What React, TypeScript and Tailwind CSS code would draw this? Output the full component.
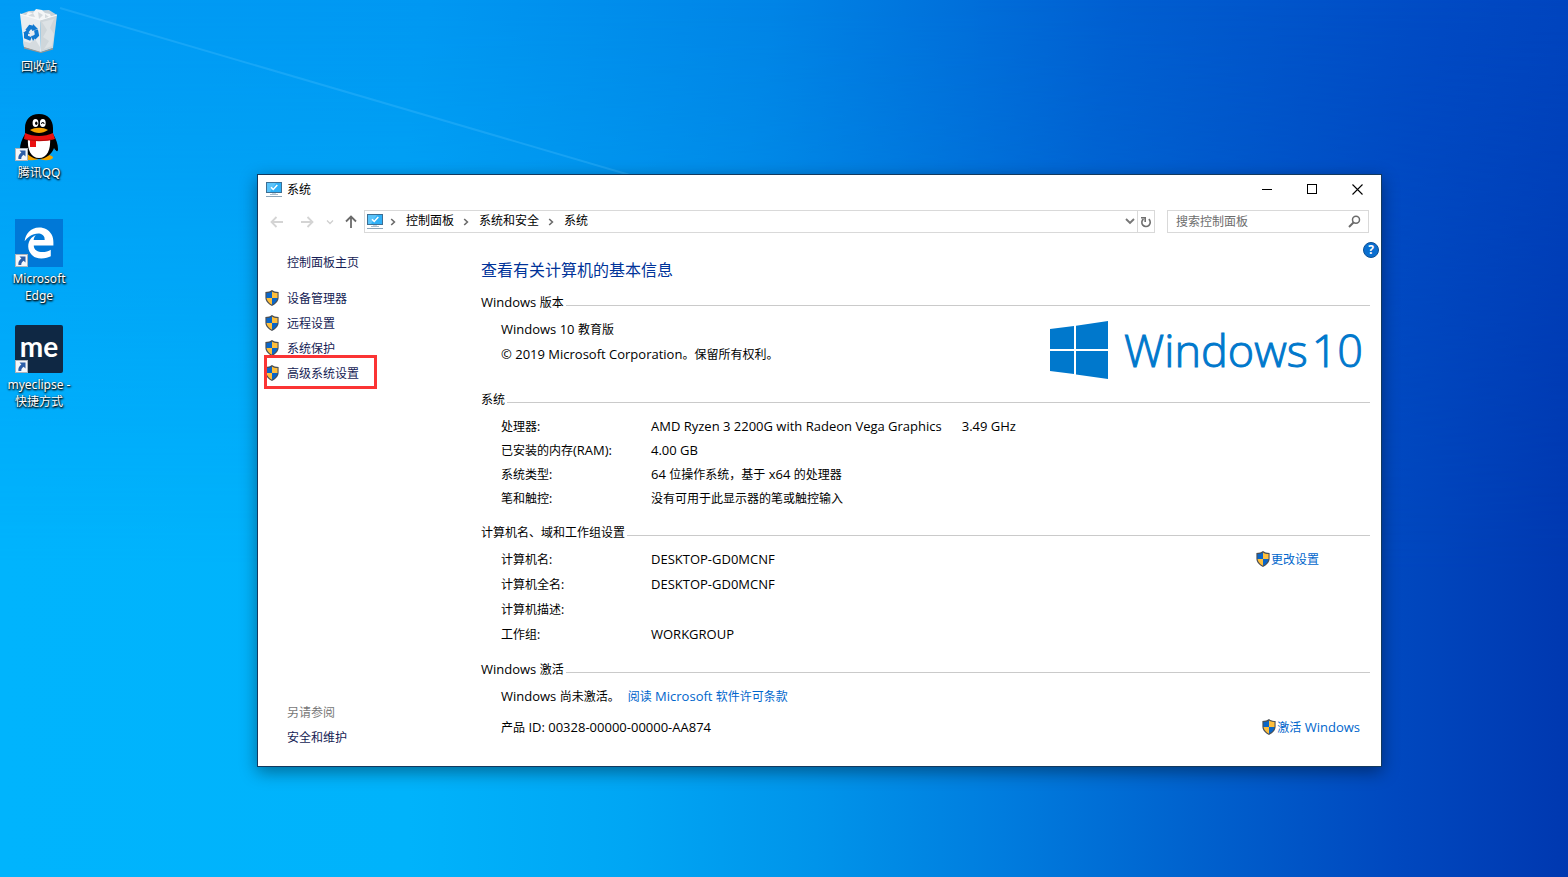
import { ReactNode } from "react";
import { FaEdgeLegacy } from "react-icons/fa6";

/* ── Icons ── */

function Shield() {
  return (
    <svg width="14" height="16" viewBox="0 0 14 16" className="mb-0.5 shrink-0" aria-hidden="true">
      <path d="M7 0C5.6 1.3 3 2 .4 2v5.500C.4 11.500 3.500 14.200 7 16c3.500-1.800 6.600-4.500 6.600-8.500V2C11 2 8.400 1.300 7 0z" fill="#4b4f54" />
      <path d="M7 1.500C5.500 2.500 3.600 3 1.500 3.100V8H7z" fill="#0a66c8" />
      <path d="M7 1.500C8.500 2.500 10.400 3 12.500 3.100V8H7z" fill="#ffbf3c" />
      <path d="M1.500 8c.3 2.900 2.500 5.100 5.500 6.700V8z" fill="#ffbf3c" />
      <path d="M12.500 8c-.3 2.900-2.500 5.100-5.500 6.700V8z" fill="#0a66c8" />
    </svg>
  );
}

function ComputerIcon() {
  return (
    <svg width="16" height="16" viewBox="0 0 16 16" className="shrink-0" aria-hidden="true">
      <rect x="0" y="0" width="16" height="11" fill="#3d6f94" />
      <rect x="1" y="1" width="14" height="9" fill="#2fb0f7" />
      <path d="M1 1h9L4 10H1z" fill="#5cc4fa" />
      <path d="M5 5.300l2.200 2.200L11.300 3" fill="none" stroke="#fff" strokeWidth="1.500" />
      <rect x="4" y="12" width="8" height="1" fill="#a9bccb" />
      <rect x="6" y="11" width="4" height="1" fill="#c8d6e0" />
      <rect x="0" y="14" width="16" height="1" fill="#8aa4b8" />
    </svg>
  );
}

function Chevron() {
  return (
    <svg width="7" height="8" viewBox="0 0 7 8" className="shrink-0" aria-hidden="true">
      <path d="M1.200 1L4.400 4 1.200 7" fill="none" stroke="#6b6b6b" strokeWidth="1.600" />
    </svg>
  );
}

function Arrow({ turn, color }: { turn: string; color: string }) {
  return (
    <svg width="14" height="14" viewBox="0 0 14 14" className={turn} aria-hidden="true">
      <path d="M13 7H2M6.500 2L1.500 7l5 5" fill="none" stroke={color} strokeWidth="1.800" />
    </svg>
  );
}

function RecycleBin() {
  return (
    <svg width="48" height="48" viewBox="0 0 48 48" aria-hidden="true">
      <path d="M6 7l8-3 20-1 8 5-4 4-12 3L9 12z" fill="#c9d2d8" />
      <path d="M10 10l3-5 5 1 3-4 6 1 3 3 5 1 2 5-9 3-12-1z" fill="#f4f6f7" />
      <path d="M13 9l5-3 2 4zM23 5l5 3-4 4zM30 7l4 3-4 2z" fill="#d4dade" />
      <path d="M5 7l20 6 1 32-17-5z" fill="#e9edf0" />
      <path d="M25 13l17-5-4 33-12 4z" fill="#cfd6da" />
      <path d="M27 15l5 8-4 7 6 4-5 8 8-3 2-12-4-6 4-9z" fill="#dde2e5" />
      <path d="M8 34l7 2 5-4 5 8v5L9 40z" fill="#d5dbdf" />
      <path d="M5 7l20 6 17-5" fill="none" stroke="#f8fafb" strokeWidth="1" />
      <path d="M9 40l17 5 12-4v1.500L26 46 9 41.500z" fill="#9b9690" />
      <g fill="none" stroke="#1179d0" strokeWidth="4">
        <path d="M12 24l3-4 4 1" />
        <path d="M21 23l1 5-3 3" />
        <path d="M16 32l-5-2v-4" />
      </g>
      <path d="M18 17l5 5-6 2zM22 28l-6 1 2 5zM8 26l4-3 3 4z" fill="#1179d0" />
    </svg>
  );
}

function Penguin() {
  return (
    <svg width="48" height="48" viewBox="0 0 48 48" aria-hidden="true">
      <ellipse cx="16" cy="44.500" rx="9" ry="2.800" fill="#f5a500" />
      <ellipse cx="31" cy="44.500" rx="7" ry="2.800" fill="#f5a500" />
      <path d="M24 1C15 1 10 7 10 15v6C7 26 5 31 5 36c0 3 1.500 3 4-1 2 6 8 11 15 11s13-5 15-11c2.500 4 4 4 4 1 0-5-2-10-5-15v-6C38 7 33 1 24 1z" fill="#000" />
      <path d="M13 25h22c1 12-3 20-11 20S12 37 13 25z" fill="#fff" />
      <ellipse cx="20.500" cy="10" rx="2.900" ry="4" fill="#fff" />
      <ellipse cx="27.800" cy="10" rx="2.900" ry="4" fill="#fff" />
      <ellipse cx="21.300" cy="10.300" rx="1.200" ry="1.800" fill="#000" />
      <path d="M26.500 11c.3-2 2.300-2 2.600 0" fill="none" stroke="#000" strokeWidth="1.100" />
      <path d="M15 17c5-3 13-3 18 0-3 2-6 3-9 3s-6-1-9-3z" fill="#f5a000" />
      <path d="M10 20c8 4 20 4 28 0l2 6c-9 3-23 3-31 0z" fill="#ea1111" />
      <path d="M15 26h6v8h-6z" fill="#ea1111" />
      <path d="M10 26c8 2 21 2 28 0" fill="none" stroke="#8e0a0a" strokeWidth=".6" />
    </svg>
  );
}

function ShortcutMark() {
  return (
    <svg width="13" height="13" viewBox="0 0 13 13" className="absolute bottom-0 left-0" aria-hidden="true">
      <rect x=".5" y=".5" width="12" height="12" fill="#f5f7fa" stroke="#aeb4bb" />
      <path d="M4.500 2.500h6v6L8.600 6.700C6.800 7.900 6.200 9.300 6.300 11H3.400c-.4-2.600.8-4.900 3-6.500z" fill="#2c5ea8" />
    </svg>
  );
}

// Latin runs are set one size up, so they sit evenly beside the Chinese glyphs
function En({ children }: { children: ReactNode }) {
  return <span className="font-['Open_Sans'] text-[13px] leading-none">{children}</span>;
}

/* ── Desktop ── */

const desktopIcons: { label: string; art: ReactNode; shortcut: boolean }[] = [
  { label: "回收站", art: <RecycleBin />, shortcut: false },
  { label: "腾讯QQ", art: <Penguin />, shortcut: true },
  {
    label: "Microsoft Edge",
    art: (
      <span className="flex size-12 items-center justify-center bg-[#0078d7] text-white">
        <FaEdgeLegacy size={32} />
      </span>
    ),
    shortcut: true,
  },
  {
    label: "myeclipse - 快捷方式",
    art: (
      <span className="flex size-12 items-center justify-center rounded-xs bg-[#0f2844] pb-1.5 font-['Lato'] text-[28px] leading-none font-bold text-white">
        me
      </span>
    ),
    shortcut: true,
  },
];

/* ── Window content ── */

const tasks = ["设备管理器", "远程设置", "系统保护", "高级系统设置"];

const systemRows: [ReactNode, ReactNode][] = [
  ["处理器:", <En>AMD Ryzen 3 2200G with Radeon Vega Graphics<span className="ml-5">3.49 GHz</span></En>],
  [<>已安装的内存<En>(RAM):</En></>, <En>4.00 GB</En>],
  ["系统类型:", <><En>64 </En>位操作系统，基于<En> x64 </En>的处理器</>],
  ["笔和触控:", "没有可用于此显示器的笔或触控输入"],
];

const nameRows: [string, string][] = [
  ["计算机名:", "DESKTOP-GD0MCNF"],
  ["计算机全名:", "DESKTOP-GD0MCNF"],
  ["计算机描述:", ""],
  ["工作组:", "WORKGROUP"],
];

function SectionTitle({ children }: { children: ReactNode }) {
  return (
    <div className="mb-[3px] flex h-[22px] items-center gap-0.5">
      <h2 className="leading-4">{children}</h2>
      <div className="mt-[5px] h-px flex-1 bg-[#cacaca]" />
    </div>
  );
}

function WindowsLogo() {
  return (
    <div className="mr-[7px] flex items-center gap-4 pt-1 pb-2.5 text-[#0078cc]">
      <svg width="58" height="58" viewBox="0 0 58 58" fill="currentColor" aria-hidden="true">
        <path d="M0 8l24-3v23H0zM26 4.700L58 0v28H26zM0 30h24v23L0 50zM26 30h32v28l-32-4.500z" />
      </svg>
      <span className="flex gap-1 font-['Open_Sans'] text-[45px] leading-[58px] font-light [-webkit-text-stroke:1px_#0078cc]">
        <span>Windows</span>
        <span>10</span>
      </span>
    </div>
  );
}

function TitleBar() {
  return (
    <header className="flex h-[30px] items-center pl-2">
      <ComputerIcon />
      <h1 className="ml-[5px]">系统</h1>
      <div className="ml-auto flex h-full pb-0.5">
        <button aria-label="最小化" className="flex w-[46px] items-center justify-center">
          <svg width="10" height="10" viewBox="0 0 10 10"><path d="M0 5.500h10" stroke="#000" /></svg>
        </button>
        <button aria-label="最大化" className="flex w-11 items-center justify-center">
          <svg width="10" height="10" viewBox="0 0 10 10"><rect x=".5" y=".5" width="9" height="9" fill="none" stroke="#000" /></svg>
        </button>
        <button aria-label="关闭" className="flex w-[47px] items-center justify-center">
          <svg width="11" height="11" viewBox="0 0 11 11"><path d="M.5.5l10 10M10.500.5l-10 10" stroke="#000" strokeWidth="1.100" /></svg>
        </button>
      </div>
    </header>
  );
}

function AddressBar() {
  return (
    <div className="flex h-[33px] items-center pr-3 pl-3">
      <button aria-label="后退"><Arrow turn="" color="#d4d4d4" /></button>
      <button aria-label="前进" className="ml-4"><Arrow turn="rotate-180" color="#d4d4d4" /></button>
      <button aria-label="最近浏览的位置" className="ml-3">
        <svg width="8" height="6" viewBox="0 0 8 6"><path d="M1 1.500l3 3 3-3" fill="none" stroke="#cfcfcf" strokeWidth="1.300" /></svg>
      </button>
      <button aria-label="上移" className="ml-2.5"><Arrow turn="rotate-90" color="#6b6b6b" /></button>
      <div className="ml-1.5 flex h-[23px] flex-1 items-stretch border border-[#d9d9d9]">
        <nav className="flex flex-1 items-center pl-0.5">
          <ComputerIcon />
          <span className="ml-[7px] flex items-center gap-[9px]">
            <Chevron />
            <a href="#panel" className="pb-0.5">控制面板</a>
            <Chevron />
            <a href="#security" className="pb-0.5">系统和安全</a>
            <Chevron />
            <a href="#system" className="pb-0.5">系统</a>
          </span>
        </nav>
        <button aria-label="历史记录" className="px-0.5">
          <svg width="10" height="7" viewBox="0 0 10 7"><path d="M1 1l4 4 4-4" fill="none" stroke="#777" strokeWidth="1.900" /></svg>
        </button>
        <button aria-label="刷新" className="flex w-[17px] items-center justify-center border-l border-[#d9d9d9]">
          <svg width="12" height="12" viewBox="0 0 12 12">
            <path d="M8.800 3.200A4.200 4.200 0 1 1 3.500 3" fill="none" stroke="#6f6f6f" strokeWidth="1.600" />
            <path d="M1 1.800h4.200V6" fill="none" stroke="#6f6f6f" strokeWidth="1.600" />
          </svg>
        </button>
      </div>
      <label className="ml-3 flex h-[23px] w-[202px] items-center border border-[#d9d9d9] pr-[7px] pl-2">
        <input aria-label="搜索控制面板" placeholder="搜索控制面板" className="min-w-0 flex-1 outline-none placeholder:text-[#6d6d6d]" />
        <svg width="13" height="13" viewBox="0 0 13 13" aria-hidden="true">
          <circle cx="8" cy="4.800" r="3.500" fill="none" stroke="#6b6b6b" strokeWidth="1.500" />
          <path d="M5.500 7.500L1 12" stroke="#6b6b6b" strokeWidth="2" />
        </svg>
      </label>
    </div>
  );
}

function Sidebar() {
  return (
    <aside className="flex w-[223px] shrink-0 flex-col pb-4 pl-[7px] leading-[25px] text-[#151c55]">
      <a href="#home" className="mt-3 ml-[22px]">控制面板主页</a>
      <ul className="mt-[11px]">
        {tasks.map((task, i) => (
          <li key={task} className="relative">
            <a href="#task" className="flex items-center gap-2">
              <Shield />
              {task}
            </a>
            {i === tasks.length - 1 && (
              <span className="absolute -top-1.5 -left-px h-[34px] w-[113px] border-3 border-[#fb3434]" />
            )}
          </li>
        ))}
      </ul>
      <h2 className="mt-auto ml-[22px] text-[#777]">另请参阅</h2>
      <a href="#maintenance" className="ml-[22px]">安全和维护</a>
    </aside>
  );
}

function Details() {
  return (
    <main className="flex-1 pt-5 pr-[11px] pb-[26px]">
      <h1 className="mb-[10px] text-base leading-6 text-[#003399]">查看有关计算机的基本信息</h1>

      <SectionTitle><En>Windows </En>版本</SectionTitle>
      <div className="flex justify-between pl-5 leading-[25px]">
        <div>
          <p className="h-[25px]"><En>Windows 10 </En>教育版</p>
          <p className="h-[25px]"><En>© 2019 Microsoft Corporation</En>。保留所有权利。</p>
        </div>
        <WindowsLogo />
      </div>

      <SectionTitle>系统</SectionTitle>
      <dl className="mb-[11px] pt-px pl-5 leading-6">
        {systemRows.map(([name, value], i) => (
          <div key={i} className="flex h-6">
            <dt className="w-[150px]">{name}</dt>
            <dd>{value}</dd>
          </div>
        ))}
      </dl>

      <SectionTitle>计算机名、域和工作组设置</SectionTitle>
      <div className="mb-3 flex justify-between pl-5 leading-[25px]">
        <dl>
          {nameRows.map(([name, value]) => (
            <div key={name} className="flex h-[25px]">
              <dt className="w-[150px]">{name}</dt>
              <dd><En>{value}</En></dd>
            </div>
          ))}
        </dl>
        <a href="#change" className="mr-[51px] flex h-[25px] items-center gap-px text-[#0066cc]">
          <Shield />
          更改设置
        </a>
      </div>

      <SectionTitle><En>Windows </En>激活</SectionTitle>
      <div className="pl-5 leading-[25px]">
        <p className="h-[25px]">
          <En>Windows </En>尚未激活。
          <a href="#license" className="ml-2 text-[#0066cc]">阅读<En> Microsoft </En>软件许可条款</a>
        </p>
        <div className="mt-1.5 flex h-[25px] justify-between">
          <p>产品<En> ID: 00328-00000-00000-AA874</En></p>
          <a href="#activate" className="mr-2.5 flex items-center gap-px text-[#0066cc]">
            <Shield />
            <span>激活<En> Windows</En></span>
          </a>
        </div>
      </div>
    </main>
  );
}

export default function App() {
  return (
    <div className="relative min-h-screen overflow-hidden bg-[linear-gradient(100deg,#009cf5_0%,#0098f2_25%,#0084e6_45%,#005fd1_65%,#004ac4_84%,#003eb8_100%)] font-['Noto_Sans','Noto_Sans_CJK_SC',sans-serif] text-xs text-black">
      {/* Wallpaper: the light pools toward the lower left */}
      <div className="absolute inset-0 bg-[linear-gradient(90deg,#00b4fd_0%,#00b3fb_26%,#00a6f4_40%,#0094ea_52%,#007cde_64%,#0062ce_76%,#0048bf_89%,#0038b0_100%)] mask-[linear-gradient(180deg,transparent_0%,#000_65%)]" />
      <svg className="absolute inset-0 size-full" aria-hidden="true">
        <path d="M60 8L640 178" stroke="#5cc8ff" strokeOpacity=".25" strokeWidth="2" />
      </svg>

      <ul className="relative flex w-[78px] flex-col pt-[7px]">
        {desktopIcons.map(icon => (
          <li key={icon.label} className="h-[106px]">
            <button className="flex w-full flex-col items-center">
              <span className="relative">
                {icon.art}
                {icon.shortcut && <ShortcutMark />}
              </span>
              <span className="mt-[3px] leading-[17px] text-white [text-shadow:0_1px_2px_#000,1px_1px_2px_#000]">
                {icon.label}
              </span>
            </button>
          </li>
        ))}
      </ul>

      <section className="absolute top-[174px] right-[186px] left-[257px] border border-[#12395f] bg-white shadow-[0_5px_16px_rgba(0,0,0,0.4)]">
        <TitleBar />
        <AddressBar />
        <div className="relative flex">
          <Sidebar />
          <Details />
          <button aria-label="帮助" className="absolute top-1 right-0.5 flex size-4 items-center justify-center rounded-full border border-[#0b4f94] bg-[#0a6fd0] text-xs leading-none font-bold text-white">
            ?
          </button>
        </div>
      </section>
    </div>
  );
}
